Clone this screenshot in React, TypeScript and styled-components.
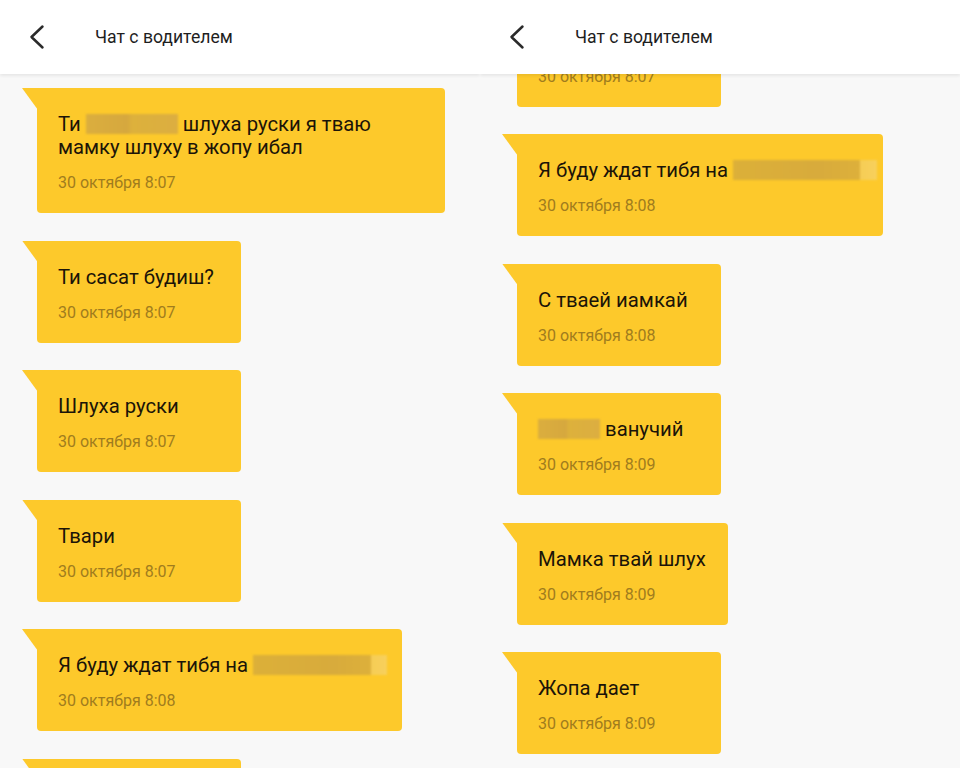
import React from "react";
import styled, { createGlobalStyle } from "styled-components";

const Global = createGlobalStyle`
  html, body { margin: 0; padding: 0; background: #ffffff; }
  body { font-family: Roboto, "Noto Sans", "Liberation Sans", sans-serif; }
`;

const Page = styled.div`
  display: grid;
  grid-template-columns: 480px 480px;
  width: 960px;
  height: 774px;
  overflow: hidden;
`;

const Panel = styled.section`
  display: flex;
  flex-direction: column;
  height: 768px;
  overflow: hidden;
  background: #f8f8f8;
`;

const Header = styled.header`
  position: relative;
  z-index: 2;
  flex: 0 0 74px;
  display: flex;
  align-items: center;
  gap: 47px;
  padding-left: 28px;
  background: #ffffff;
  box-shadow: 0 2px 3px rgba(0, 0, 0, 0.07);
`;

const Title = styled.h1`
  margin: 0;
  font-size: 17.6px;
  font-weight: 400;
  color: #1e1e1e;
`;

const List = styled.div<{ $offset: number }>`
  display: flex;
  flex-direction: column;
  align-items: flex-start;
  padding-top: 14px;
  margin-top: ${(p) => p.$offset}px;
`;

const Bubble = styled.div<{ $width?: number }>`
  position: relative;
  margin: 0 0 27.5px 37px;
  min-width: 204px;
  ${(p) => (p.$width ? `width: ${p.$width}px;` : "")}
  box-sizing: border-box;
  padding: 25px 22px 20px 21px;
  background: #fdc92b;
  border-radius: 0 4px 4px 4px;

  &::before {
    content: "";
    position: absolute;
    left: -15px;
    top: 0;
    width: 16px;
    height: 22px;
    background: #fdc92b;
    clip-path: polygon(0 0, 100% 0, 100% 100%);
  }
`;

const Text = styled.div`
  font-size: 20.3px;
  line-height: 23px;
  min-height: 23px;
  color: #1b1408;
  white-space: pre;
`;

const Time = styled.div`
  margin-top: 14px;
  font-size: 16px;
  line-height: 20px;
  color: #a07c1e;
`;

const Blur = styled.span<{ $w: number; $tail?: boolean }>`
  display: inline-block;
  width: ${(p) => p.$w}px;
  height: 20px;
  vertical-align: -3px;
  background: ${(p) =>
    p.$tail
      ? "linear-gradient(90deg, #dcb039 0%, #d8ab3c 60%, #ddb03b 88%, #f6cd55 88%, #f8d05c 100%)"
      : "linear-gradient(90deg, #dbae3e 0%, #d6a83e 45%, #ddb13c 50%, #dcae41 100%)"};
  filter: blur(1px);
`;

const Back = () => (
  <svg width="20" height="26" viewBox="0 0 20 26" fill="none">
    <path d="M14.5 2.5 L3.5 13 L14.5 23.5" stroke="#2b2b2b" strokeWidth="2.5" strokeLinecap="round" strokeLinejoin="round" />
  </svg>
);

type Msg = { text: React.ReactNode; time?: string; width?: number };

const leftMsgs: Msg[] = [
  {
    text: (
      <>
        Ти <Blur $w={92} /> шлуха руски я тваю{"\n"}мамку шлуху в жопу ибал
      </>
    ),
    time: "30 октября 8:07",
    width: 408,
  },
  { text: "Ти сасат будиш?", time: "30 октября 8:07" },
  { text: "Шлуха руски", time: "30 октября 8:07" },
  { text: "Твари", time: "30 октября 8:07" },
  {
    text: (
      <>
        Я буду ждат тибя на <Blur $w={134} $tail />
      </>
    ),
    time: "30 октября 8:08",
    width: 365,
  },
  { text: "" },
];

const rightMsgs: Msg[] = [
  { text: "", time: "30 октября 8:07" },
  {
    text: (
      <>
        Я буду ждат тибя на <Blur $w={144} $tail />
      </>
    ),
    time: "30 октября 8:08",
    width: 366,
  },
  { text: "С тваей иамкай", time: "30 октября 8:08" },
  {
    text: (
      <>
        <Blur $w={62} /> ванучий
      </>
    ),
    time: "30 октября 8:09",
  },
  { text: "Мамка твай шлух", time: "30 октября 8:09" },
  { text: "Жопа дает", time: "30 октября 8:09" },
];

const ChatPanel = ({ msgs, offset }: { msgs: Msg[]; offset: number }) => (
  <Panel>
    <Header>
      <Back />
      <Title>Чат с водителем</Title>
    </Header>
    <List $offset={offset}>
      {msgs.map((m, i) => (
        <Bubble key={i} $width={m.width}>
          <Text>{m.text}</Text>
          {m.time && <Time>{m.time}</Time>}
        </Bubble>
      ))}
    </List>
  </Panel>
);

export default function App() {
  return (
    <>
      <Global />
      <Page>
        <ChatPanel msgs={leftMsgs} offset={0} />
        <ChatPanel msgs={rightMsgs} offset={-83.5} />
      </Page>
    </>
  );
}
